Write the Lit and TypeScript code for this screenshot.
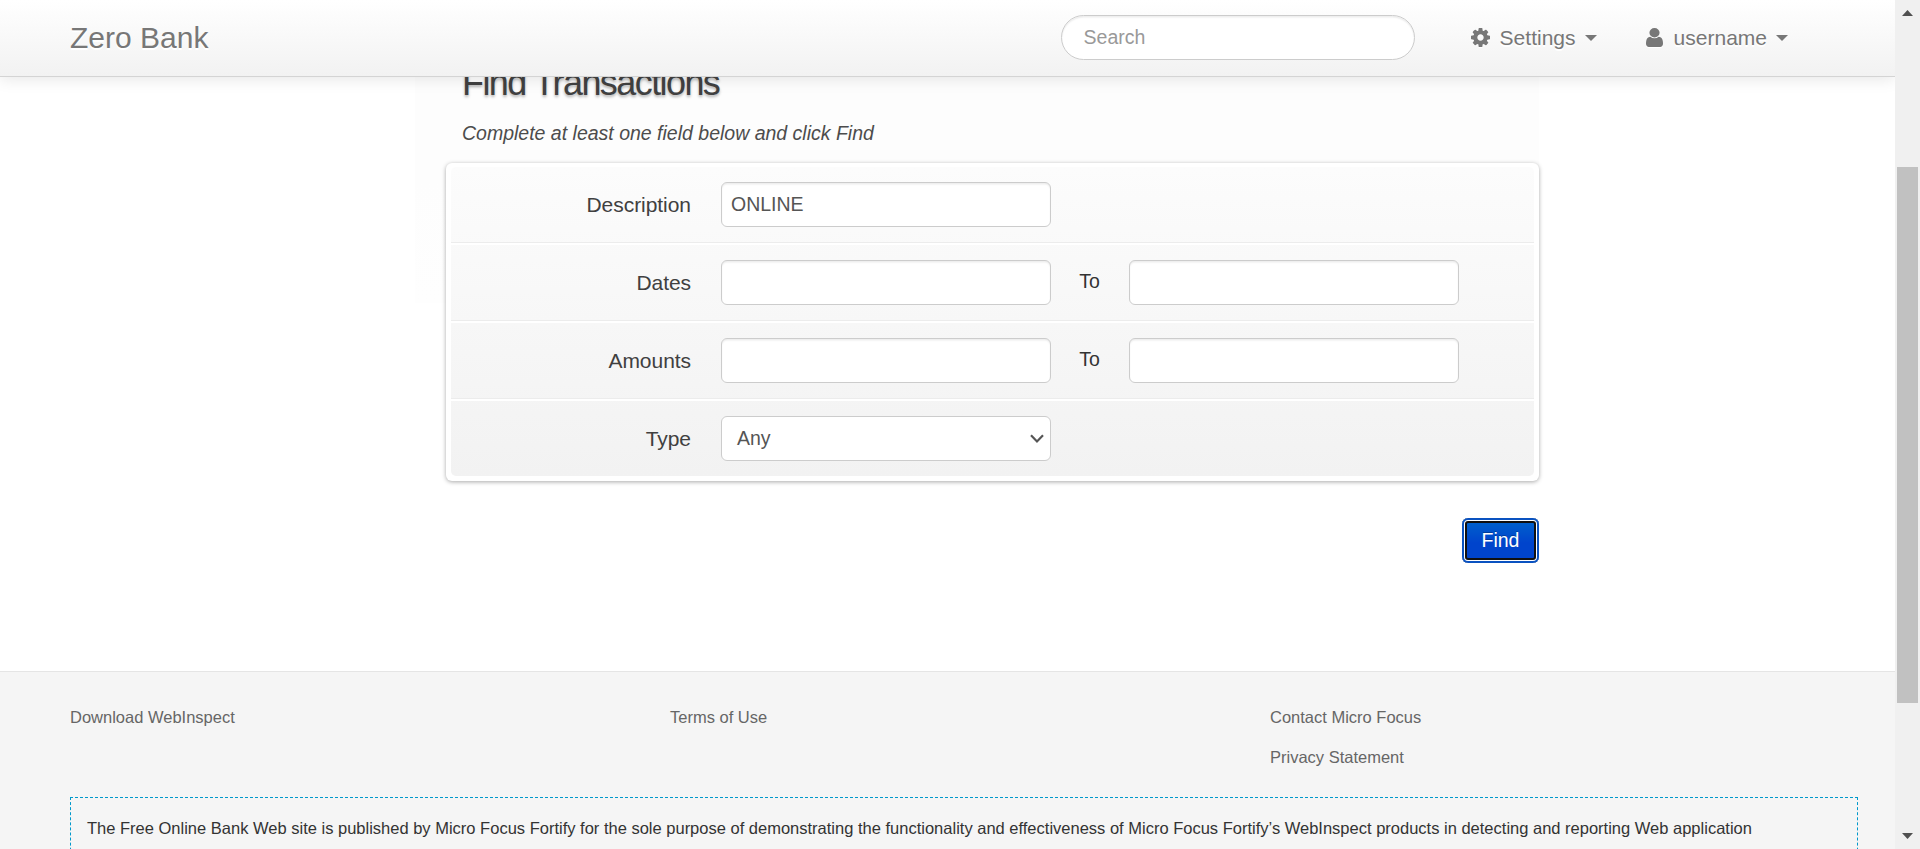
import { LitElement, html, css, svg } from "lit";
import { customElement } from "lit/decorators.js";

const COG =
  "M1152 896q0-106-75-181t-181-75-181 75-75 181 75 181 181 75 181-75 75-181zm512-109v222q0 12-8 23t-20 13l-185 28q-19 54-39 91 35 50 107 138 10 12 10 25t-9 23q-27 37-99 108t-94 71q-12 0-26-9l-138-108q-44 23-91 38-16 136-29 186-7 28-36 28h-222q-14 0-24.5-8.5t-11.5-21.5l-28-184q-49-16-90-37l-141 107q-10 9-25 9-14 0-25-11-126-114-165-168-7-10-7-23 0-12 8-23 15-21 51-66.5t54-70.5q-27-50-41-99l-183-27q-13-2-21-12.5t-8-23.5v-222q0-12 8-23t19-13l186-28q14-46 39-92-40-57-107-138-10-12-10-24 0-10 9-23 26-36 98.5-107.5t94.5-71.5q13 0 26 10l138 107q44-23 91-38 16-136 29-186 7-28 36-28h222q14 0 24.5 8.5t11.5 21.5l28 184q49 16 90 37l142-107q9-9 24-9 13 0 25 10 129 119 165 170 7 8 7 22 0 12-8 23-15 21-51 66.5t-54 70.5q26 50 41 98l183 28q13 2 21 12.5t8 23.5z";
const USER =
  "M1536 1399q0 109-62.5 187t-150.5 78h-854q-88 0-150.5-78t-62.5-187q0-85 8.5-160.5t31.5-152 58.5-131 94-89 134.5-34.5q131 128 313 128t313-128q76 0 134.5 34.5t94 89 58.5 131 31.5 152 8.5 160.5zm-256-887q0 159-112.5 271.5t-271.5 112.5-271.5-112.5-112.5-271.5 112.5-271.5 271.5-112.5 271.5 112.5 112.5 271.5z";

@customElement("app-root")
export class AppRoot extends LitElement {
  static styles = css`
    :host {
      display: grid;
      grid-template-columns: 1fr 25px;
      height: 849px;
      overflow: hidden;
      background: #fff;
      color: #333;
      font-family: "Liberation Sans", Arial, sans-serif;
      font-size: 19.5px;
      line-height: 30px;
    }
    * {
      box-sizing: border-box;
    }
    a {
      color: inherit;
      text-decoration: none;
    }
    .page {
      position: relative;
      height: 849px;
      overflow: hidden;
    }
    .navbar {
      position: absolute;
      top: 0;
      left: 0;
      right: 0;
      z-index: 5;
      display: flex;
      align-items: center;
      height: 77px;
      padding: 0 107px 1px 70px;
      border-bottom: 1px solid #d4d4d4;
      background: linear-gradient(#ffffff, #f2f2f2);
      box-shadow: 0 2px 15px rgba(0, 0, 0, 0.1);
      color: #777;
      text-shadow: 0 1.5px 0 #fff;
    }
    .brand {
      margin-right: auto;
      font-size: 30px;
    }
    .search {
      width: 354px;
      height: 45px;
      padding: 0 22px;
      border: 1px solid #ccc;
      border-radius: 23px;
      background: #fff;
      box-shadow: inset 0 1.5px 1.5px rgba(0, 0, 0, 0.075);
      color: #555;
      font: 19.5px "Liberation Sans", Arial, sans-serif;
    }
    .search::placeholder {
      color: #999;
      opacity: 1;
    }
    .menu {
      display: flex;
      align-items: center;
      font-size: 21px;
    }
    .settings {
      width: 175px;
      margin-left: 56px;
    }
    .icon {
      height: 19px;
      fill: #777;
      filter: drop-shadow(0 1.5px 0 #fff);
    }
    .cog {
      width: 19px;
      margin-right: 10px;
    }
    .user {
      width: 17px;
      margin-right: 11px;
    }
    .caret {
      margin-left: 9px;
      border: 6px solid transparent;
      border-top-color: #777;
      border-bottom: 0;
    }
    .content {
      height: 671px;
      padding: 53px 356px 0 415px;
    }
    .board {
      height: 250px;
      background: linear-gradient(#fdfdfd 50%, #fefefe);
    }
    .form {
      padding-left: 31px;
    }
    .title {
      margin: 0 0 5px 16px;
      color: #404040;
      font-size: 36px;
      font-weight: 400;
      line-height: 60px;
      letter-spacing: -1.58px;
      text-shadow: 0 1.5px 3px rgba(0, 0, 0, 0.3);
    }
    .hint {
      margin: 0 0 15px 16px;
      color: #4c4c4c;
      font-style: italic;
    }
    .panel {
      width: 1093px;
      padding: 4px 5px 5px;
      border-radius: 6px;
      background: #fff;
      box-shadow: 0 1px 4px rgba(0, 0, 0, 0.34);
    }
    .rows {
      border-radius: 5px;
      background: linear-gradient(#fcfcfc, #f2f2f2);
    }
    .row {
      display: flex;
      align-items: center;
      height: 78px;
      padding-bottom: 1px;
      border-bottom: 2px solid #fff;
      box-shadow: inset 0 -1px 0 #ececec;
    }
    .row:last-child {
      height: 75px;
      padding-bottom: 0;
      border-bottom: 0;
      box-shadow: none;
    }
    .label {
      width: 240px;
      margin-right: 30px;
      color: #404040;
      font-size: 21px;
      letter-spacing: -0.05px;
      text-align: right;
    }
    .field {
      width: 330px;
      height: 45px;
      padding: 0 9px;
      border: 1px solid #ccc;
      border-radius: 6px;
      background: #fff;
      box-shadow: inset 0 1.5px 1.5px rgba(0, 0, 0, 0.075);
      color: #555;
      font: 19.5px "Liberation Sans", Arial, sans-serif;
    }
    .to {
      width: 78px;
      padding: 0 1px 4px 0;
      text-align: center;
    }
    .select {
      display: flex;
      align-items: center;
      justify-content: space-between;
      padding: 0 6px 0 15px;
      box-shadow: none;
    }
    .chevron {
      width: 14px;
      height: 9px;
      fill: none;
      stroke: #555;
      stroke-width: 2.2;
    }
    .actions {
      display: flex;
      justify-content: flex-end;
      width: 1093px;
      padding-top: 37px;
    }
    .find {
      width: 77px;
      height: 45px;
      padding: 0;
      border: 0;
      border-radius: 6px;
      background: linear-gradient(#0066cc, #0044cc 55%, #0044cc);
      box-shadow:
        inset 0 0 0 2px #0a52c0,
        inset 0 0 0 3px #fff,
        inset 0 0 0 5px #101010;
      color: #fff;
      font: 19.5px "Liberation Sans", Arial, sans-serif;
      text-shadow: 0 -1.5px 0 rgba(0, 0, 0, 0.25);
    }
    .footer {
      height: 400px;
      padding: 30px 37px 0 70px;
      border-top: 1px solid #e5e5e5;
      background: #f5f5f5;
      font-size: 16.5px;
    }
    .links {
      display: grid;
      grid-template-columns: 600px 600px 1fr;
      color: #666;
    }
    .column {
      display: flex;
      flex-direction: column;
      gap: 10px;
    }
    .notice {
      margin-top: 25px;
      padding: 15px 16px;
      border: 1px dashed #0099cc;
      height: 150px;
      white-space: nowrap;
    }
    .scrollbar {
      display: flex;
      flex-direction: column;
      align-items: center;
      padding: 10px 0;
      background: #f0f0f0;
    }
    .arrow {
      width: 11px;
      height: 6px;
      fill: #505050;
    }
    .thumb {
      width: 21px;
      height: 536px;
      margin: 151px 0 auto;
      background: #c1c1c1;
    }
  `;

  private field(value = "") {
    return html`<input class="field" type="text" .value=${value} />`;
  }

  private range(label: string) {
    return html`<div class="row">
      <label class="label">${label}</label>${this.field()}<span class="to">To</span>${this.field()}
    </div>`;
  }

  private icon(path: string, name: string, box: string) {
    return html`<svg class="icon ${name}" viewBox=${box} preserveAspectRatio="none">
      ${svg`<path d=${path}></path>`}
    </svg>`;
  }

  render() {
    return html`
      <div class="page">
        <header class="navbar">
          <a class="brand">Zero Bank</a>
          <input class="search" type="text" placeholder="Search" />
          <a class="menu settings">
            ${this.icon(COG, "cog", "128 128 1536 1536")}Settings<span class="caret"></span>
          </a>
          <a class="menu">
            ${this.icon(USER, "user", "256 128 1280 1536")}username<span class="caret"></span>
          </a>
        </header>
        <main class="content">
          <div class="board">
            <div class="form">
              <h2 class="title">Find Transactions</h2>
              <p class="hint">Complete at least one field below and click Find</p>
              <div class="panel">
                <div class="rows">
                  <div class="row"><label class="label">Description</label>${this.field("ONLINE")}</div>
                  ${this.range("Dates")} ${this.range("Amounts")}
                  <div class="row">
                    <label class="label">Type</label>
                    <div class="field select">
                      Any
                      <svg class="chevron" viewBox="0 0 14 9"><path d="M1 1.2 7 7.4l6-6.2"></path></svg>
                    </div>
                  </div>
                </div>
              </div>
              <div class="actions"><button class="find">Find</button></div>
            </div>
          </div>
        </main>
        <footer class="footer">
          <nav class="links">
            <div class="column"><a>Download WebInspect</a></div>
            <div class="column"><a>Terms of Use</a></div>
            <div class="column"><a>Contact Micro Focus</a><a>Privacy Statement</a></div>
          </nav>
          <div class="notice">
            The Free Online Bank Web site is published by Micro Focus Fortify for the sole purpose of demonstrating the
            functionality and effectiveness of Micro Focus Fortify’s WebInspect products in detecting and reporting Web
            application
          </div>
        </footer>
      </div>
      <div class="scrollbar">
        <svg class="arrow" viewBox="0 0 11 6"><path d="M5.5 0 11 6H0z"></path></svg>
        <div class="thumb"></div>
        <svg class="arrow" viewBox="0 0 11 6"><path d="M0 0h11L5.5 6z"></path></svg>
      </div>
    `;
  }
}
